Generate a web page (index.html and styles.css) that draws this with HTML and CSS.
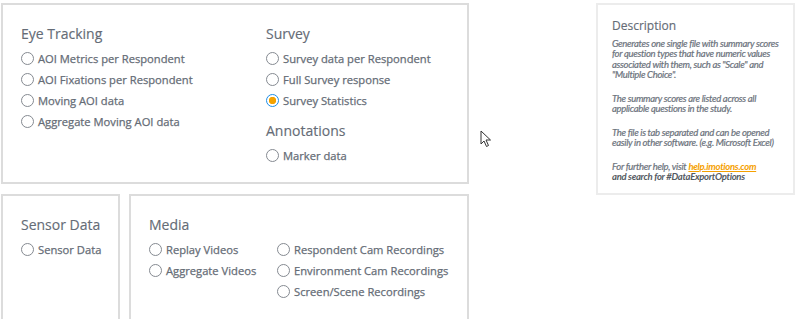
FILE: index.html
```html
<!DOCTYPE html>
<html lang="en">

<head>
    <meta charset="UTF-8">
    <meta name="viewport" content="width=device-width, initial-scale=1.0">
    <title>Data Export</title>
    <link rel="stylesheet" href="styles.css">
</head>

<body>
    <div class="page">
        <div class="options">
            <!-- 상단 패널 -->
            <div class="panel panel_top">
                <div class="col col_eye">
                    <div class="group_title">Eye Tracking</div>
                    <label class="opt"><input type="radio" name="export" /><span>AOI Metrics per Respondent</span></label>
                    <label class="opt"><input type="radio" name="export" /><span>AOI Fixations per Respondent</span></label>
                    <label class="opt"><input type="radio" name="export" /><span>Moving AOI data</span></label>
                    <label class="opt"><input type="radio" name="export" /><span>Aggregate Moving AOI data</span></label>
                </div>
                <div class="col">
                    <div class="group_title">Survey</div>
                    <label class="opt"><input type="radio" name="export" /><span>Survey data per Respondent</span></label>
                    <label class="opt"><input type="radio" name="export" /><span>Full Survey response</span></label>
                    <label class="opt"><input type="radio" name="export" checked /><span>Survey Statistics</span></label>

                    <div class="group_title group_next">Annotations</div>
                    <label class="opt"><input type="radio" name="export" /><span>Marker data</span></label>
                </div>
            </div>

            <!-- 하단 패널 -->
            <div class="bottom_row">
                <div class="panel panel_sensor">
                    <div class="group_title">Sensor Data</div>
                    <label class="opt"><input type="radio" name="export" /><span>Sensor Data</span></label>
                </div>
                <div class="panel panel_media">
                    <div class="group_title">Media</div>
                    <div class="media_cols">
                        <div class="col col_media">
                            <label class="opt"><input type="radio" name="export" /><span>Replay Videos</span></label>
                            <label class="opt"><input type="radio" name="export" /><span>Aggregate Videos</span></label>
                        </div>
                        <div class="col">
                            <label class="opt"><input type="radio" name="export" /><span>Respondent Cam Recordings</span></label>
                            <label class="opt"><input type="radio" name="export" /><span>Environment Cam Recordings</span></label>
                            <label class="opt"><input type="radio" name="export" /><span>Screen/Scene Recordings</span></label>
                        </div>
                    </div>
                </div>
            </div>
        </div>

        <div class="desc">
            <div class="desc_title">Description</div>
            <p>Generates one single file with summary scores for question types that have numeric values associated with them, such as "Scale" and "Multiple Choice".</p>
            <p>The summary scores are listed across all applicable questions in the study.</p>
            <p>The file is tab separated and can be opened easily in other software. (e.g. Microsoft Excel)</p>
            <p>For further help, visit <a href="#">help.imotions.com</a><br /><b>and search for #DataExportOptions</b></p>
        </div>
    </div>

    <!-- 마우스 커서 -->
    <svg class="cursor" width="12" height="18" viewBox="0 0 12 18">
        <path d="M1 1 L1 14 L4 11 L6.5 16.5 L8.5 15.5 L6 10 L10.5 10 Z" fill="#fff" stroke="#333" stroke-width="1" stroke-linejoin="round" />
    </svg>
</body>

</html>
```

FILE: styles.css
```css
body {
    margin: 0;
    background-color: #fff;
    font-family: "Open Sans", "Noto Sans", sans-serif;
    color: #656c76;
}

.page {
    display: flex;
    align-items: flex-start;
    padding-top: 3px;
    padding-left: 1px;
}

.options {
    width: 468px;
}

/* 패널 */
.panel {
    box-sizing: border-box;
    border: 2px solid #dcdcdc;
    padding: 18px 0 0 18px;
}

.panel_top {
    height: 181px;
    display: flex;
}

.col_eye {
    width: 245px;
}

.bottom_row {
    display: flex;
    gap: 9px;
    margin-top: 10px;
}

.panel_sensor {
    width: 119px;
    height: 140px;
}

.panel_media {
    width: 340px;
    height: 140px;
}

.media_cols {
    display: flex;
}

.col_media {
    width: 128px;
}

/* 제목 */
.group_title {
    font-size: 14px;
    line-height: 22px;
    margin-bottom: 3px;
    -webkit-text-stroke: 0.15px #656c76;
}

.group_next {
    margin-top: 9px;
}

/* 라디오 */
.opt {
    display: flex;
    align-items: center;
    height: 21px;
    font-size: 11.2px;
    white-space: nowrap;
    -webkit-text-stroke: 0.25px #656c76;
}

.opt input {
    appearance: none;
    -webkit-appearance: none;
    box-sizing: border-box;
    width: 13px;
    height: 13px;
    margin: 0 4px 0 0;
    border: 1px solid #858a91;
    border-radius: 50%;
    background-color: #fff;
}

.opt input:checked {
    border: 1px solid #1d8ee8;
    background: radial-gradient(circle, #f5a300 0 3.4px, #fff 4px);
}

/* 설명 패널 */
.desc {
    box-sizing: border-box;
    width: 199px;
    height: 192px;
    margin-left: auto;
    margin-right: 5px;
    border: 2px solid #ececec;
    padding: 14px 8px 0 14px;
    font-family: "Lato", "Liberation Sans", sans-serif;
}

.desc_title {
    font-family: "Open Sans", sans-serif;
    font-size: 12px;
    line-height: 14px;
    margin-bottom: 6px;
    -webkit-text-stroke: 0.15px #656c76;
}

.desc p {
    margin: 0 0 13.5px 0;
    font-size: 9.5px;
    line-height: 10.3px;
    font-style: italic;
    letter-spacing: -0.3px;
    color: #6b727c;
    -webkit-text-stroke: 0.2px #6b727c;
}

.desc a {
    color: #f5a000;
    font-weight: bold;
    -webkit-text-stroke: 0;
}

.desc b {
    color: #545a62;
    -webkit-text-stroke: 0;
}

.cursor {
    position: absolute;
    left: 480px;
    top: 130px;
}
```
